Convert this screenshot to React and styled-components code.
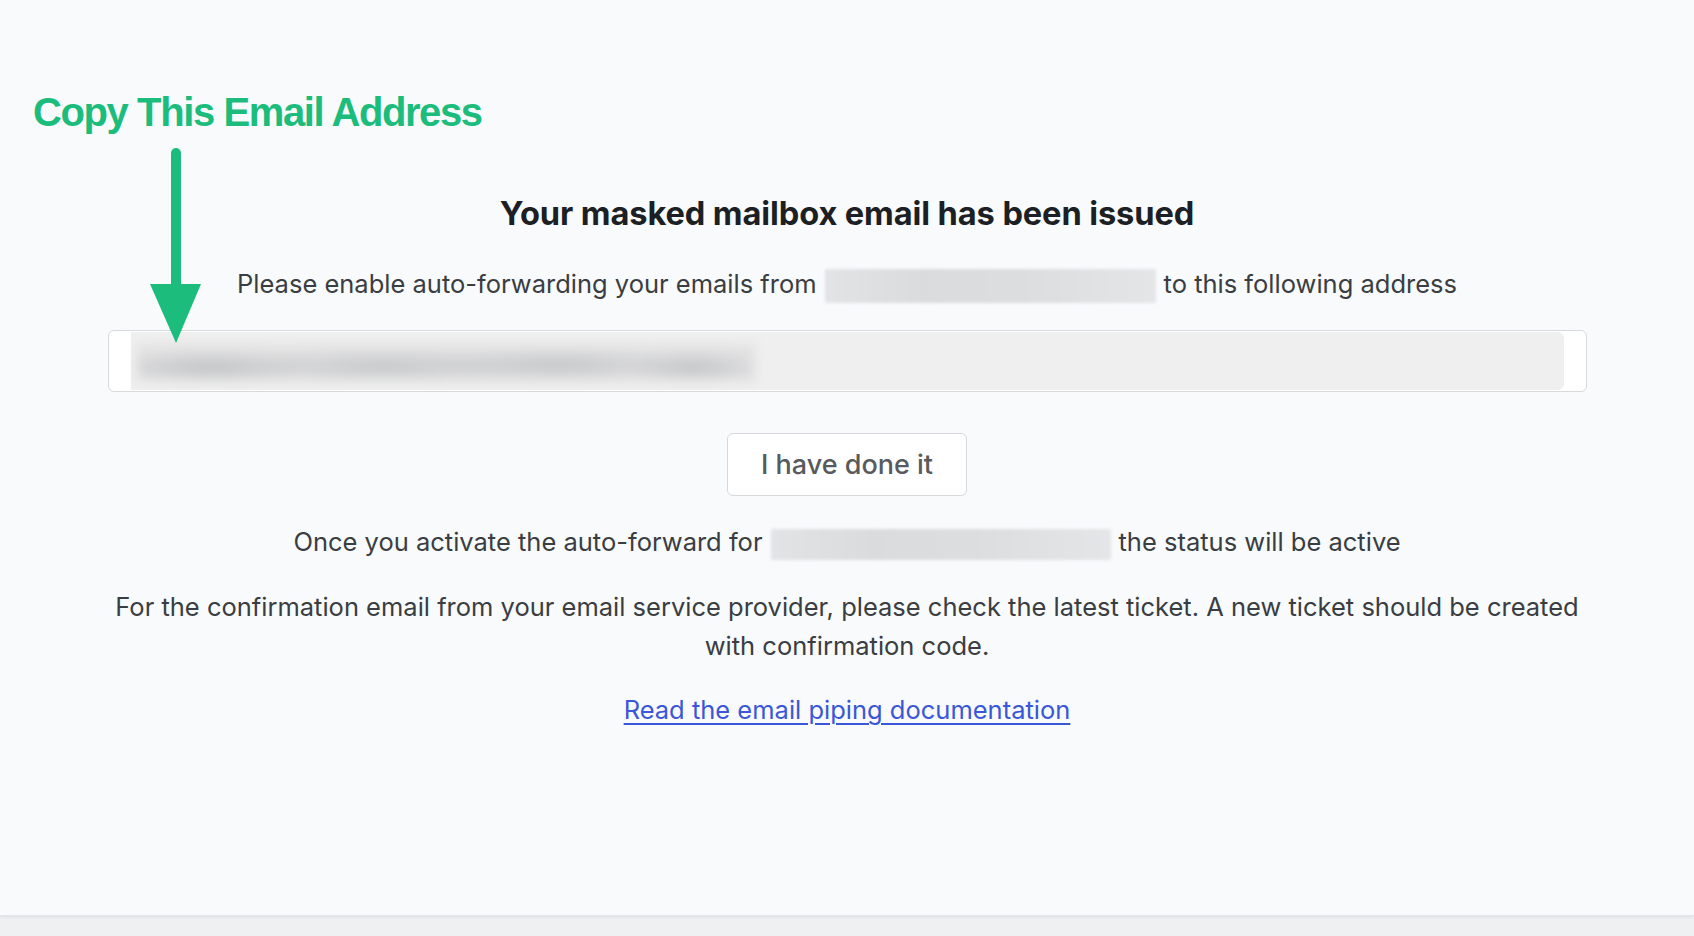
import React from "react";
import styled, { createGlobalStyle } from "styled-components";

const Global = createGlobalStyle`
  html, body { margin: 0; padding: 0; }
  body {
    background: #eff0f2;
    font-family: Inter, "Noto Sans", "Liberation Sans", sans-serif;
    -webkit-font-smoothing: antialiased;
  }
`;

const Page = styled.div`
  width: 1694px;
  height: 936px;
  background: #eff0f2;
  overflow: hidden;
`;

const Card = styled.main`
  position: relative;
  height: 916px;
  background: #f8fafc;
  box-shadow: 0 1px 3px rgba(0, 0, 0, 0.08);
  border-bottom: 1px solid #e3e5e8;
  box-sizing: border-box;
`;

const Content = styled.section`
  width: 1479px;
  margin: 0 auto;
  padding-top: 193px;
  display: flex;
  flex-direction: column;
  align-items: center;
  text-align: center;
`;

const Heading = styled.h2`
  margin: 0;
  font-size: 32.6px;
  line-height: 40px;
  font-weight: 700;
  color: #1c1f23;
  letter-spacing: -0.1px;
`;

const Line = styled.p`
  margin: ${(p) => p.$mt || 0}px 0 0;
  font-size: 25.5px;
  line-height: ${(p) => p.$lh || 36}px;
  color: #3a3d42;
  white-space: ${(p) => (p.$wrap ? "normal" : "nowrap")};
`;

const Redacted = styled.span`
  display: inline-block;
  vertical-align: middle;
  width: ${(p) => p.$w}px;
  height: ${(p) => p.$h}px;
  margin: 0 ${(p) => p.$mx || 8}px;
  background: linear-gradient(90deg, #e2e3e5 0%, #dadbdd 30%, #dcdddf 60%, #e4e5e7 100%);
  border-radius: 2px;
  filter: blur(1.5px);
  position: relative;
  top: ${(p) => p.$dy || 0}px;
`;

const Field = styled.div`
  margin-top: 27px;
  width: 100%;
  height: 62px;
  box-sizing: border-box;
  border: 1.5px solid #d7d9dc;
  border-radius: 6px;
  background: #ffffff;
  padding: 1px 22px 1px 22px;
  display: flex;
`;

const FieldValue = styled.div`
  flex: 1;
  background: #efefef;
  border-radius: 0 6px 6px 0;
  display: flex;
  align-items: center;
  padding-left: 6px;
`;

const BlurText = styled.span`
  display: block;
  width: 618px;
  height: 38px;
  margin-top: 4px;
  background:
    radial-gradient(ellipse 18% 45% at 12% 60%, #c3c4c6 0%, transparent 100%),
    radial-gradient(ellipse 25% 45% at 40% 58%, #c7c8ca 0%, transparent 100%),
    radial-gradient(ellipse 22% 45% at 68% 55%, #c6c7c9 0%, transparent 100%),
    radial-gradient(ellipse 12% 45% at 90% 60%, #c5c6c8 0%, transparent 100%),
    #e2e2e3;
  filter: blur(5px);
`;

const DoneButton = styled.button`
  margin-top: 41px;
  width: 240px;
  height: 63px;
  background: #ffffff;
  border: 1.5px solid #d6d8db;
  border-radius: 6px;
  font-family: inherit;
  font-size: 27px;
  font-weight: 500;
  color: #585a5d;
  cursor: pointer;
`;

const DocLink = styled.a`
  margin-top: 27px;
  font-size: 25.5px;
  line-height: 36px;
  color: #3a57d8;
  text-decoration: underline;
  text-underline-offset: 4px;
  text-decoration-thickness: 1.5px;
`;

const Annotation = styled.div`
  position: absolute;
  left: 33px;
  top: 92px;
  font-family: "Liberation Sans", Arial, sans-serif;
  font-weight: 700;
  font-size: 40px;
  line-height: 40px;
  letter-spacing: -1.4px;
  color: #1cbd7c;
  white-space: nowrap;
`;

const Arrow = styled.svg`
  position: absolute;
  left: 150px;
  top: 145px;
`;

export default function App() {
  return (
    <Page>
      <Global />
      <Card>
        <Content>
          <Heading>Your masked mailbox email has been issued</Heading>
          <Line $mt={33}>
            Please enable auto-forwarding your emails from
            <Redacted $w={331} $h={34} />
            to this following address
          </Line>
          <Field>
            <FieldValue>
              <BlurText />
            </FieldValue>
          </Field>
          <DoneButton>I have done it</DoneButton>
          <Line $mt={28}>
            Once you activate the auto-forward for
            <Redacted $w={340} $h={31} />
            the status will be active
          </Line>
          <Line $mt={27} $lh={39} $wrap>
            For the confirmation email from your email service provider, please check the latest ticket. A new ticket should be created with confirmation code.
          </Line>
          <DocLink href="#">Read the email piping documentation</DocLink>
        </Content>
        <Annotation>Copy This Email Address</Annotation>
        <Arrow width="52" height="200" viewBox="0 0 52 200">
          <line x1="26" y1="8" x2="26" y2="145" stroke="#1cbd7c" strokeWidth="10" strokeLinecap="round" />
          <polygon points="0,139 51,139 26,198" fill="#1cbd7c" />
        </Arrow>
      </Card>
    </Page>
  );
}
